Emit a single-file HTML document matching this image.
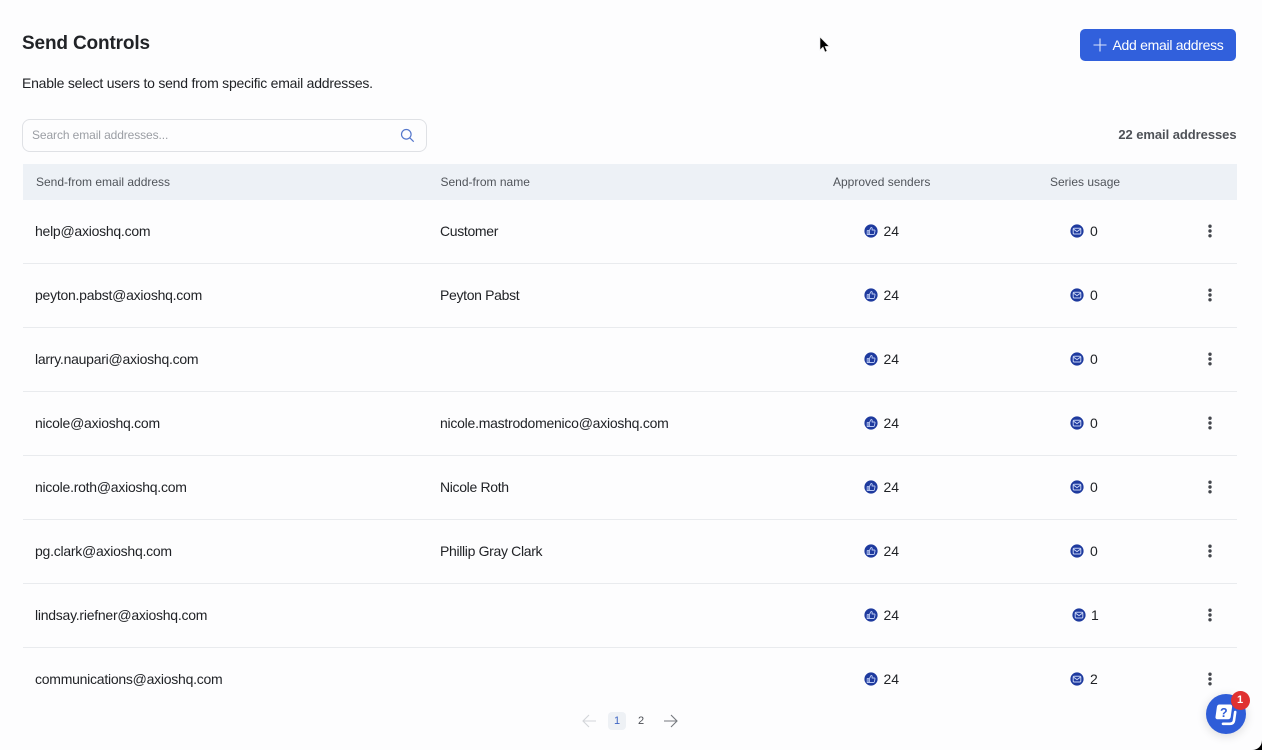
<!DOCTYPE html>
<html><head><meta charset="utf-8">
<style>
html,body{margin:0;padding:0;width:1262px;height:750px;overflow:hidden;background:#fdfdfe;font-family:"Liberation Sans",sans-serif;color:#1f2125}
.t{position:absolute;white-space:nowrap;line-height:20px;font-size:14px;letter-spacing:-.25px}
.n{letter-spacing:-.33px}
.c{letter-spacing:0}
.h{color:#50545a;font-size:12px;letter-spacing:0}
.line{position:absolute;left:23px;width:1213.500px;height:1px;background:#e9ebee}
.ic{position:absolute;width:14px;height:14px}
.dots{position:absolute;width:4px;height:14px}
</style></head><body>
<svg width="0" height="0" style="position:absolute"><defs>
<g id="up"><circle cx="7" cy="7" r="6.6" fill="#1e3a9e"/><path d="M3.2 6.6h1.6v3.9H3.2zM5.4 6.5l1.7-3c.8 0 1.2.6 1.1 1.3l-.2 1.2h2.3c.5 0 .8.4.7.9l-.6 2.8c-.1.5-.4.8-.9.8H5.4z" fill="none" stroke="#b9c8f2" stroke-width=".9" stroke-linejoin="round"/></g>
<g id="ml"><circle cx="7" cy="7" r="6.6" fill="#1e3a9e"/><rect x="3.2" y="4.2" width="7.6" height="5.8" rx="1" fill="none" stroke="#c6d2f5" stroke-width="1"/><path d="M3.6 5.2L7 7.6l3.4-2.4" fill="none" stroke="#c6d2f5" stroke-width="1"/></g>
<g id="dt"><circle cx="2" cy="2.2" r="1.7" fill="#43464c"/><circle cx="2" cy="7" r="1.7" fill="#43464c"/><circle cx="2" cy="11.8" r="1.7" fill="#43464c"/></g>
</defs></svg>

<div class="t" style="left:22px;top:32px;font-size:19px;line-height:24px;font-weight:700;letter-spacing:-.15px;color:#212327">Send Controls</div>
<div class="t" style="left:22px;top:73px;letter-spacing:-.23px">Enable select users to send from specific email addresses.</div>

<div style="position:absolute;left:1080.300px;top:29px;width:156.200px;height:32px;background:#3160dc;border-radius:5px"></div>
<svg style="position:absolute;left:1093px;top:38px" width="14" height="14"><path d="M7 .5v13M.5 7h13" stroke="#dbe4fb" stroke-width="1.1" fill="none"/></svg>
<div class="t" style="left:1112.500px;top:35px;color:#fff;letter-spacing:-.29px">Add email address</div>

<svg style="position:absolute;left:817.500px;top:36px" width="14" height="18"><path d="M2 1v13l3-3 2 5 2-1-2-4.600h4.200z" fill="#000" stroke="#e8e8e8" stroke-width=".6"/></svg>

<div style="position:absolute;left:22.300px;top:118.500px;width:403px;height:31px;border:1px solid #dfe1e5;border-radius:8px;background:#fdfdfe"></div>
<div class="t" style="left:32px;top:125px;font-size:12px;color:#9b9ea4;letter-spacing:-.1px">Search email addresses...</div>
<svg style="position:absolute;left:400px;top:128px" width="15" height="15"><circle cx="6.300" cy="6.300" r="4.800" fill="none" stroke="#5577cc" stroke-width="1.200"/><path d="M9.800 9.800l3.900 3.900" stroke="#5577cc" stroke-width="1.200"/></svg>
<div class="t" style="right:25.500px;top:125px;font-weight:700;font-size:13px;color:#4f5258;letter-spacing:-.06px">22 email addresses</div>

<div style="position:absolute;left:23px;top:164px;width:1213.500px;height:36px;background:#edf1f6"></div>
<div class="t h" style="left:36px;top:172px">Send-from email address</div>
<div class="t h" style="left:440.500px;top:172px">Send-from name</div>
<div class="t h" style="left:833px;top:172px">Approved senders</div>
<div class="t h" style="left:1050px;top:172px">Series usage</div>

<!-- rows -->
<div class="t" style="left:35px;top:221px">help@axioshq.com</div>
<div class="t n" style="left:440px;top:221px">Customer</div>
<svg class="ic" style="left:863.500px;top:224px"><use href="#up"/></svg><div class="t c" style="left:883.500px;top:221px">24</div>
<svg class="ic" style="left:1070px;top:224px"><use href="#ml"/></svg><div class="t c" style="left:1090px;top:221px">0</div>
<svg class="dots" style="left:1208px;top:224px"><use href="#dt"/></svg>
<div class="line" style="top:263px"></div>

<div class="t" style="left:35px;top:285px">peyton.pabst@axioshq.com</div>
<div class="t n" style="left:440px;top:285px">Peyton Pabst</div>
<svg class="ic" style="left:863.500px;top:288px"><use href="#up"/></svg><div class="t c" style="left:883.500px;top:285px">24</div>
<svg class="ic" style="left:1070px;top:288px"><use href="#ml"/></svg><div class="t c" style="left:1090px;top:285px">0</div>
<svg class="dots" style="left:1208px;top:288px"><use href="#dt"/></svg>
<div class="line" style="top:327px"></div>

<div class="t" style="left:35px;top:349px">larry.naupari@axioshq.com</div>
<svg class="ic" style="left:863.500px;top:352px"><use href="#up"/></svg><div class="t c" style="left:883.500px;top:349px">24</div>
<svg class="ic" style="left:1070px;top:352px"><use href="#ml"/></svg><div class="t c" style="left:1090px;top:349px">0</div>
<svg class="dots" style="left:1208px;top:352px"><use href="#dt"/></svg>
<div class="line" style="top:391px"></div>

<div class="t" style="left:35px;top:413px">nicole@axioshq.com</div>
<div class="t" style="left:440px;top:413px">nicole.mastrodomenico@axioshq.com</div>
<svg class="ic" style="left:863.500px;top:416px"><use href="#up"/></svg><div class="t c" style="left:883.500px;top:413px">24</div>
<svg class="ic" style="left:1070px;top:416px"><use href="#ml"/></svg><div class="t c" style="left:1090px;top:413px">0</div>
<svg class="dots" style="left:1208px;top:416px"><use href="#dt"/></svg>
<div class="line" style="top:455px"></div>

<div class="t" style="left:35px;top:477px">nicole.roth@axioshq.com</div>
<div class="t n" style="left:440px;top:477px">Nicole Roth</div>
<svg class="ic" style="left:863.500px;top:480px"><use href="#up"/></svg><div class="t c" style="left:883.500px;top:477px">24</div>
<svg class="ic" style="left:1070px;top:480px"><use href="#ml"/></svg><div class="t c" style="left:1090px;top:477px">0</div>
<svg class="dots" style="left:1208px;top:480px"><use href="#dt"/></svg>
<div class="line" style="top:519px"></div>

<div class="t" style="left:35px;top:541px">pg.clark@axioshq.com</div>
<div class="t n" style="left:440px;top:541px">Phillip Gray Clark</div>
<svg class="ic" style="left:863.500px;top:544px"><use href="#up"/></svg><div class="t c" style="left:883.500px;top:541px">24</div>
<svg class="ic" style="left:1070px;top:544px"><use href="#ml"/></svg><div class="t c" style="left:1090px;top:541px">0</div>
<svg class="dots" style="left:1208px;top:544px"><use href="#dt"/></svg>
<div class="line" style="top:583px"></div>

<div class="t" style="left:35px;top:605px">lindsay.riefner@axioshq.com</div>
<svg class="ic" style="left:863.500px;top:608px"><use href="#up"/></svg><div class="t c" style="left:883.500px;top:605px">24</div>
<svg class="ic" style="left:1071.500px;top:608px"><use href="#ml"/></svg><div class="t c" style="left:1091px;top:605px">1</div>
<svg class="dots" style="left:1208px;top:608px"><use href="#dt"/></svg>
<div class="line" style="top:647px"></div>

<div class="t" style="left:35px;top:669px">communications@axioshq.com</div>
<svg class="ic" style="left:863.500px;top:672px"><use href="#up"/></svg><div class="t c" style="left:883.500px;top:669px">24</div>
<svg class="ic" style="left:1070px;top:672px"><use href="#ml"/></svg><div class="t c" style="left:1090px;top:669px">2</div>
<svg class="dots" style="left:1208px;top:672px"><use href="#dt"/></svg>

<!-- pagination -->
<svg style="position:absolute;left:581.500px;top:714px" width="15" height="14"><path d="M14 7H1M7 1L1 7l6 6" fill="none" stroke="#d3d5d9" stroke-width="1.100"/></svg>
<div style="position:absolute;left:608px;top:712px;width:18px;height:18px;background:#eef1f5;border-radius:4px"></div>
<div class="t c" style="left:614px;top:711px;font-size:11px;color:#3f66c4">1</div>
<div class="t c" style="left:638px;top:711px;font-size:11px;color:#4b4e54">2</div>
<svg style="position:absolute;left:662.500px;top:714px" width="15" height="14"><path d="M1 7h13M8 1l6 6-6 6" fill="none" stroke="#75787e" stroke-width="1.100"/></svg>

<!-- help bubble -->
<div style="position:absolute;left:1206px;top:694px;width:40px;height:40px;border-radius:50%;background:#2f5dd8;box-shadow:0 2px 10px rgba(0,0,0,.14)"></div>
<svg style="position:absolute;left:1215px;top:703px" width="24" height="24">
<path d="M8 20.800h7c2.300 0 3.700-1.300 4-3.300l1.200-8.500" fill="none" stroke="#fff" stroke-width="2.600" stroke-linecap="round"/>
<path d="M4.500 1.500h10.500c1.400 0 2.300 1 2.100 2.400l-1.400 10c-.2 1.400-1.200 2.400-2.600 2.400H2.600c-1.400 0-2.300-1-2.100-2.400l1.400-10c.2-1.400 1.200-2.400 2.600-2.400z" fill="#fff"/>
<text x="8.800" y="14" font-family="Liberation Sans,sans-serif" font-weight="700" font-size="12.500" fill="#2f5dd8" text-anchor="middle">?</text>
</svg>
<div style="position:absolute;left:1230.500px;top:690.500px;width:19px;height:19px;border-radius:50%;background:#e03131"></div>
<div class="t c" style="left:1230.500px;top:690px;width:19px;text-align:center;color:#fff;font-size:11px;font-weight:700">1</div>

<!-- window corner -->
<svg style="position:absolute;left:1252px;top:740px" width="10" height="10"><path d="M10 0C10 6 6 10 0 10H10z" fill="#000"/></svg>
</body></html>
